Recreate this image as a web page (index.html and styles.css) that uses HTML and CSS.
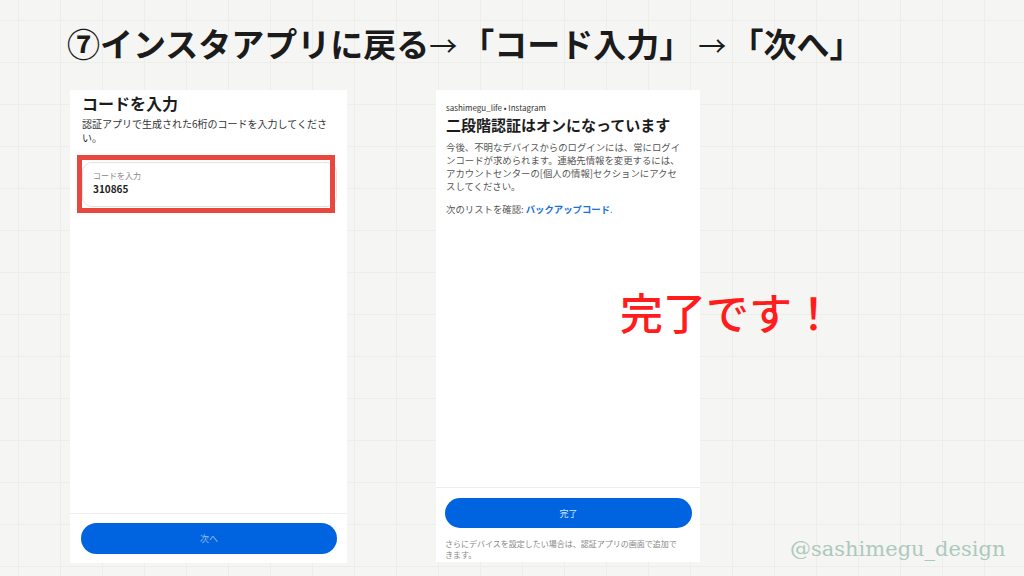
FILE: index.html
```html
<!DOCTYPE html>
<html lang="ja">
<head>
    <meta charset="UTF-8">
    <meta name="viewport" content="width=device-width, initial-scale=1.0">
    <title>二段階認証の設定 ⑦</title>
    <link rel="stylesheet" href="styles.css">
</head>
<body>
    <div class="slide">
        <h1 class="title">⑦インスタアプリに戻る<span class="arrow">→</span>「コード入力」<span class="arrow">→</span>「次へ」</h1>

        <div class="screens">
            <section class="phone phone-code">
                <div class="phone-body">
                    <h2 class="code-title">コードを入力</h2>
                    <p class="lead">認証アプリで生成された6桁のコードを入力してくださ<br>い。</p>
                    <div class="field">
                        <span class="field-label">コードを入力</span>
                        <span class="field-value">310865</span>
                        <div class="highlight"></div>
                    </div>
                </div>
                <div class="phone-footer">
                    <button class="btn btn-muted">次へ</button>
                </div>
            </section>

            <section class="phone phone-done">
                <div class="phone-body">
                    <p class="account">sashimegu_life • Instagram</p>
                    <h2 class="done-title">二段階認証はオンになっています</h2>
                    <p class="info">今後、不明なデバイスからのログインには、常にログイ<br>ンコードが求められます。連絡先情報を変更するには、<br>アカウントセンターの[個人の情報]セクションにアクセ<br>スしてください。</p>
                    <p class="info backup">次のリストを確認: <a href="#" class="link">バックアップコード</a>.</p>
                </div>
                <div class="phone-footer">
                    <button class="btn">完了</button>
                    <p class="note">さらにデバイスを設定したい場合は、認証アプリの画面で追加で<br>きます。</p>
                </div>
            </section>
        </div>

        <p class="done-note">完了です！</p>
        <p class="credit">@sashimegu_design</p>
    </div>
</body>
</html>
```

FILE: styles.css
```css
body {
    margin: 0;
    font-family: "Noto Sans CJK JP", "Noto Sans", sans-serif;
    color: #222;
}
.slide {
    position: relative;
    width: 1024px;
    height: 576px;
    overflow: hidden;
    background-color: #f5f5f3;
    background-image:
        linear-gradient(to right, #ededea 1px, transparent 1px),
        linear-gradient(to bottom, #ededea 1px, transparent 1px);
    background-size: 42px 42px;
    background-position: 18px 20px;
}
.title {
    margin: 0;
    height: 90px;
    padding-left: 67px;
    line-height: 86px;
    font-size: 33px;
    font-weight: 700;
    color: #1b1b1b;
    white-space: nowrap;
}
.arrow {
    font-weight: 400;
    font-size: 28px;
    margin-right: 4px;
}
.title .arrow:last-of-type {
    margin-left: 6px;
}
.screens {
    display: flex;
    align-items: flex-start;
    gap: 89px;
    padding-left: 70px;
}
.phone {
    display: flex;
    flex-direction: column;
    background-color: #fff;
}
.phone-code {
    width: 277px;
    height: 473px;
}
.phone-done {
    width: 264px;
    height: 472px;
}
.phone-body {
    flex: 1;
}
.phone-code .phone-body {
    padding: 3px 10px 0 12px;
}
.phone-done .phone-body {
    padding: 12px 10px 0 10px;
}
.code-title {
    margin: 0;
    font-size: 16px;
    line-height: 20px;
    font-weight: 700;
    color: #1c1c1c;
}
.lead {
    margin: 4px 0 0;
    font-size: 10px;
    line-height: 14px;
    color: #333;
    white-space: nowrap;
}
.field {
    position: relative;
    display: flex;
    flex-direction: column;
    margin-top: 17px;
    height: 45px;
    padding: 7px 10px 0;
    border: 1px solid #e2e2e2;
    border-radius: 10px;
    box-sizing: border-box;
}
.field-label {
    font-size: 8px;
    line-height: 12px;
    color: #888;
}
.field-value {
    font-size: 10px;
    line-height: 14px;
    font-weight: 700;
    color: #222;
}
.highlight {
    position: absolute;
    left: -6px;
    top: -8px;
    width: 258px;
    height: 58px;
    border: 5px solid #e8473d;
    box-sizing: border-box;
}
.phone-footer {
    border-top: 1px solid #eeeeee;
}
.phone-code .phone-footer {
    height: 50px;
    padding: 9px 10px 0 11px;
    box-sizing: border-box;
}
.phone-done .phone-footer {
    height: 75px;
    padding: 10px 8px 0 9px;
    box-sizing: border-box;
}
.btn {
    display: block;
    width: 100%;
    height: 31px;
    border: none;
    border-radius: 16px;
    background-color: #0064e0;
    color: #d6e5f8;
    font-family: inherit;
    font-size: 9px;
    cursor: pointer;
}
.phone-done .btn {
    height: 30px;
}
.btn-muted {
    color: #9dbbe6;
}
.account {
    margin: 0;
    font-size: 8px;
    line-height: 12px;
    color: #333;
}
.done-title {
    margin: 1px 0 0;
    font-size: 15px;
    line-height: 20px;
    font-weight: 700;
    color: #1c1c1c;
    white-space: nowrap;
}
.info {
    margin: 6px 0 0;
    font-size: 9.4px;
    line-height: 13px;
    color: #555;
    white-space: nowrap;
}
.backup {
    margin-top: 10px;
}
.link {
    color: #1a6fd8;
    font-weight: 700;
    text-decoration: none;
}
.note {
    margin: 10px 0 0;
    font-size: 8px;
    line-height: 11px;
    color: #888;
    white-space: nowrap;
}
.done-note {
    position: absolute;
    left: 620px;
    top: 290px;
    margin: 0;
    font-size: 43px;
    line-height: 1;
    font-weight: 500;
    color: #ff1c1c;
}
.credit {
    position: absolute;
    left: 790px;
    top: 539px;
    margin: 0;
    font-family: "DejaVu Serif", "Liberation Serif", serif;
    font-size: 21px;
    line-height: 1;
    color: #adc9bc;
}
```
